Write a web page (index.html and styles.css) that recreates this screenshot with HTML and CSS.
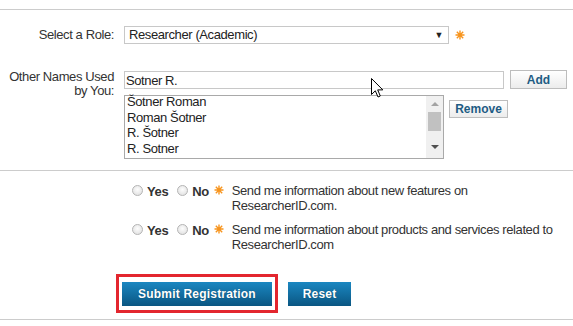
FILE: index.html
```html
<!DOCTYPE html>
<html>
  <head>
    <meta charset="UTF-8">
    <link rel="stylesheet" href="styles.css">
  </head>
  <body>
    <div class="section section-profile">
      <div class="row row-role">
        <label class="label">Select a Role:</label>
        <div class="field">
          <div class="select"><span>Researcher (Academic)</span><span class="select-arrow">&#9660;</span></div>
          <svg class="required" viewBox="0 0 10 10"><path d="M5 0.5V9.5M0.5 5H9.5M1.8 1.8L8.2 8.2M8.2 1.8L1.8 8.2"/></svg>
        </div>
      </div>
      <div class="row row-names">
        <label class="label">Other Names Used by You:</label>
        <div class="names">
          <div class="names-line">
            <input class="text-input" type="text" value="Sotner R.">
            <button class="btn-light btn-add">Add</button>
          </div>
          <div class="names-line names-line-list">
            <div class="listbox">
              <div class="listbox-items">
                <div>Šotner Roman</div>
                <div>Roman Šotner</div>
                <div>R. Šotner</div>
                <div>R. Sotner</div>
              </div>
              <div class="scrollbar">
                <span class="scroll-up"></span>
                <span class="scroll-thumb"></span>
                <span class="scroll-down"></span>
              </div>
            </div>
            <button class="btn-light btn-remove">Remove</button>
          </div>
        </div>
      </div>
    </div>

    <div class="section section-news">
      <div class="opt-row">
        <span class="radio"></span><span class="opt-label">Yes</span>
        <span class="radio"></span><span class="opt-label">No</span>
        <svg class="required" viewBox="0 0 10 10"><path d="M5 0.5V9.5M0.5 5H9.5M1.8 1.8L8.2 8.2M8.2 1.8L1.8 8.2"/></svg>
        <p class="opt-text">Send me information about new features on ResearcherID.com.</p>
      </div>
      <div class="opt-row">
        <span class="radio"></span><span class="opt-label">Yes</span>
        <span class="radio"></span><span class="opt-label">No</span>
        <svg class="required" viewBox="0 0 10 10"><path d="M5 0.5V9.5M0.5 5H9.5M1.8 1.8L8.2 8.2M8.2 1.8L1.8 8.2"/></svg>
        <p class="opt-text">Send me information about products and services related to ResearcherID.com</p>
      </div>
    </div>

    <div class="section section-actions">
      <span class="highlight"><button class="btn-blue btn-submit">Submit Registration</button></span>
      <button class="btn-blue btn-reset">Reset</button>
    </div>

    <svg class="cursor" viewBox="0 0 12 20"><path d="M0.5 0.5V16.5L4.3 12.8L7 19L9.3 18L6.7 11.9H11.8Z"/></svg>
  </body>
</html>
```

FILE: styles.css
```css
body {
  margin: 0;
  position: relative;
  font-family: "Liberation Sans", Arial, sans-serif;
  font-size: 13px;
  letter-spacing: -0.4px;
  color: #333;
  background: #fff;
}
.section {
  border-top: 1px solid #ccc;
}
.section-profile {
  margin-top: 9px;
  padding: 16px 0 11px;
}
.row {
  display: grid;
  grid-template-columns: 114px 1fr;
  column-gap: 10px;
}
.row-names {
  margin-top: 26px;
}
.label {
  text-align: right;
  line-height: 14px;
}
.row-role .label {
  line-height: 18px;
}
.row-names .label {
  width: 110px;
  justify-self: end;
}
.field {
  display: flex;
  align-items: center;
  gap: 6px;
}
.select {
  box-sizing: border-box;
  width: 325px;
  height: 18px;
  border: 1px solid #c8c8c8;
  display: flex;
  justify-content: space-between;
  align-items: center;
  padding: 0 5px 0 4px;
  line-height: 16px;
  color: #222;
}
.select-arrow {
  font-size: 9px;
  color: #222;
}
.required {
  width: 10px;
  height: 10px;
  stroke: #f7941d;
  stroke-width: 1.4;
  fill: none;
  flex: none;
}
.names-line {
  display: flex;
  align-items: flex-start;
  gap: 6px;
}
.text-input {
  box-sizing: border-box;
  width: 380px;
  height: 18px;
  margin: 1px 0 0;
  border: 1px solid #c8c8c8;
  padding: 0 1px;
  font: inherit;
  letter-spacing: -0.4px;
  color: #222;
}
.names-line-list {
  margin-top: 6px;
  gap: 5px;
}
.btn-light {
  font-family: "Liberation Sans", Arial, sans-serif;
  font-size: 12px;
  font-weight: bold;
  color: #1e5c84;
  background: linear-gradient(#fff, #ececec);
  border: 1px solid #bdbdbd;
  padding: 0;
  height: 19px;
}
.btn-add {
  width: 57px;
}
.btn-remove {
  width: 59px;
  height: 18px;
  margin-top: 5px;
}
.listbox {
  box-sizing: border-box;
  width: 320px;
  height: 64px;
  border: 1px solid #a9a9a9;
  display: flex;
}
.listbox-items {
  flex: 1;
  padding: 0 2px;
  margin-top: -2px;
  line-height: 15.6px;
  color: #222;
}
.scrollbar {
  width: 17px;
  background: #f0f0f0;
  display: flex;
  flex-direction: column;
  align-items: center;
}
.scroll-up {
  margin-top: 6px;
  border: 4px solid transparent;
  border-bottom: 4px solid #a3a3a3;
  border-top: 0;
}
.scroll-thumb {
  margin-top: 6px;
  width: 13px;
  height: 19px;
  background: #c1c1c1;
}
.scroll-down {
  margin-top: 14px;
  border: 4px solid transparent;
  border-top: 4px solid #505050;
  border-bottom: 0;
}
.section-news {
  padding: 12px 0 0 132px;
  display: flex;
  flex-direction: column;
  gap: 9px;
}
.opt-row {
  display: flex;
  align-items: flex-start;
}
.radio {
  box-sizing: border-box;
  width: 11px;
  height: 11px;
  margin-top: 2px;
  border-radius: 50%;
  border: 1px solid #b4b4b4;
  background: radial-gradient(circle at 50% 40%, #fdfdfd, #dcdcdc);
  flex: none;
}
.opt-label {
  font-weight: bold;
  line-height: 15px;
  margin: 1px 9px 0 4px;
}
.opt-row .required {
  margin: 2px 0 0 -4px;
}
.opt-text {
  margin: 0 0 0 8px;
  width: 330px;
  line-height: 15px;
  color: #333;
}
.section-actions {
  border-top: 0;
  margin-top: 22px;
  padding: 0 0 6px 116px;
  border-bottom: 1px solid #ccc;
  display: flex;
  align-items: center;
  gap: 10px;
}
.highlight {
  border: 3px solid #e3262e;
  padding: 5px 3px 4px;
  display: inline-flex;
}
.btn-blue {
  font-family: "Liberation Sans", Arial, sans-serif;
  font-size: 12px;
  font-weight: bold;
  letter-spacing: 0.2px;
  color: #fff;
  text-shadow: 0 0 1px rgba(0, 0, 0, 0.4);
  background: linear-gradient(#1b87c1, #0a5682);
  border: 0;
  height: 24px;
  padding: 0;
}
.btn-submit {
  width: 150px;
}
.btn-reset {
  width: 63px;
}
.cursor {
  position: absolute;
  left: 371px;
  top: 78px;
  width: 12px;
  height: 20px;
  fill: #fff;
  stroke: #000;
  stroke-width: 1;
}
```
